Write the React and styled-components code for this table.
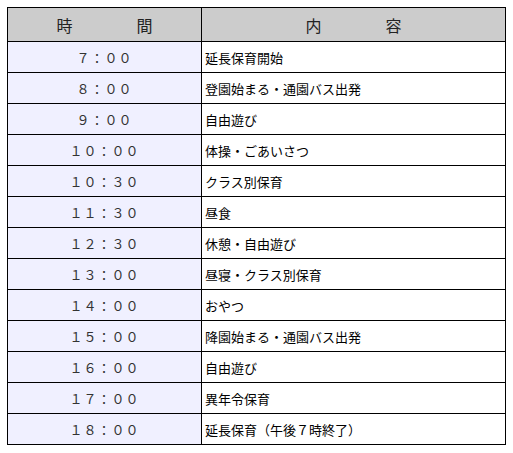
import React from "react";
import styled, { createGlobalStyle } from "styled-components";

const Global = createGlobalStyle`
  html, body { margin: 0; padding: 0; background: #fff; }
  body { padding: 7px; font-family: "Noto Sans CJK JP", "Noto Sans", sans-serif; color: #222; }
`;

const Table = styled.table`
  border-collapse: collapse;
  width: 499px;
  table-layout: fixed;
  border: 1px solid #000;
`;

const HeadCell = styled.th`
  background: #cccccc;
  border: 1px solid #000;
  height: 33px;
  padding: 0;
  font-weight: normal;
  font-size: 16px;
  color: #222;
  text-align: center;
  white-space: pre;
  line-height: 1;
  vertical-align: middle;
`;

const Row = styled.tr`
  height: 31px;
`;

const TimeCell = styled.td`
  background: #f0f0ff;
  border: 1px solid #000;
  padding: 0;
  text-align: center;
  font-size: 13px;
  color: #333;
  letter-spacing: 1px;
  line-height: 1;
`;

const TextCell = styled.td`
  border: 1px solid #000;
  padding: 0 0 0 3px;
  font-size: 13px;
  color: #000;
  line-height: 1;
`;

const rows = [
  ["７：００", "延長保育開始"],
  ["８：００", "登園始まる・通園バス出発"],
  ["９：００", "自由遊び"],
  ["１０：００", "体操・ごあいさつ"],
  ["１０：３０", "クラス別保育"],
  ["１１：３０", "昼食"],
  ["１２：３０", "休憩・自由遊び"],
  ["１３：００", "昼寝・クラス別保育"],
  ["１４：００", "おやつ"],
  ["１５：００", "降園始まる・通園バス出発"],
  ["１６：００", "自由遊び"],
  ["１７：００", "異年令保育"],
  ["１８：００", "延長保育（午後７時終了）"],
];

export default function App() {
  return (
    <>
      <Global />
      <Table>
        <colgroup>
          <col style={{ width: 194 }} />
          <col />
        </colgroup>
        <thead>
          <tr>
            <HeadCell>{"時　　　　間"}</HeadCell>
            <HeadCell>{"内　　　　容"}</HeadCell>
          </tr>
        </thead>
        <tbody>
          {rows.map(([t, c]) => (
            <Row key={t}>
              <TimeCell>{t}</TimeCell>
              <TextCell>{c}</TextCell>
            </Row>
          ))}
        </tbody>
      </Table>
    </>
  );
}
